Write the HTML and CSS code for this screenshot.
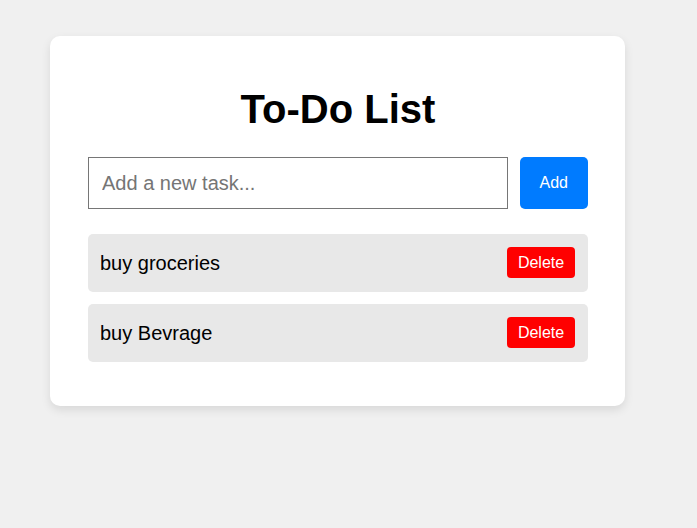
FILE: index.html
```html
<!DOCTYPE html>
<html lang="en">
<head>
<meta charset="UTF-8">
<title>To-Do List</title>
<link rel="stylesheet" href="styles.css">
</head>
<body>
  <div class="card">
    <h1 class="title">To-Do List</h1>
    <div class="add-row">
      <input class="task-input" type="text" placeholder="Add a new task...">
      <button class="add-btn">Add</button>
    </div>
    <ul class="task-list">
      <li class="task"><span class="task-text">buy groceries</span><button class="del-btn">Delete</button></li>
      <li class="task"><span class="task-text">buy Bevrage</span><button class="del-btn">Delete</button></li>
    </ul>
  </div>
</body>
</html>
```
FILE: styles.css
```css
html, body {
  margin: 0;
  padding: 0;
}
body {
  background: #f0f0f0;
  font-family: "Liberation Sans", Arial, sans-serif;
  padding: 36px 0 0 50px;
  height: 528px;
  box-sizing: border-box;
}
.card {
  width: 500px;
  padding: 30px 37px 44px 38px;
  background: #fff;
  border-radius: 10px;
  box-shadow: 0 4px 10px rgba(0, 0, 0, 0.1);
}
.title {
  margin: 20px 0 25px;
  text-align: center;
  font-size: 40px;
  font-weight: bold;
  line-height: 46px;
  color: #000;
}
.add-row {
  display: flex;
  gap: 12px;
}
.task-input {
  flex: 1;
  height: 52px;
  box-sizing: border-box;
  border: 1px solid #767676;
  border-radius: 0;
  padding: 0 13px;
  font-family: "Liberation Sans", Arial, sans-serif;
  font-size: 20px;
  outline: none;
}
.task-input::placeholder {
  color: #757575;
}
.add-btn {
  height: 52px;
  padding: 0 20px;
  border: none;
  border-radius: 5px;
  background: #007bff;
  color: #fff;
  font-family: "Liberation Sans", Arial, sans-serif;
  font-size: 16px;
}
.task-list {
  list-style: none;
  margin: 25px 0 0;
  padding: 0;
  display: flex;
  flex-direction: column;
  gap: 12px;
}
.task {
  display: flex;
  align-items: center;
  justify-content: space-between;
  height: 58px;
  box-sizing: border-box;
  padding: 0 13px 0 12px;
  background: #e8e8e8;
  border-radius: 5px;
}
.task-text {
  font-size: 20px;
  color: #000;
}
.del-btn {
  height: 31px;
  width: 68px;
  padding: 0;
  margin-bottom: 1px;
  border: none;
  border-radius: 4px;
  background: #ff0000;
  color: #fff;
  font-family: "Liberation Sans", Arial, sans-serif;
  font-size: 16px;
}
```
